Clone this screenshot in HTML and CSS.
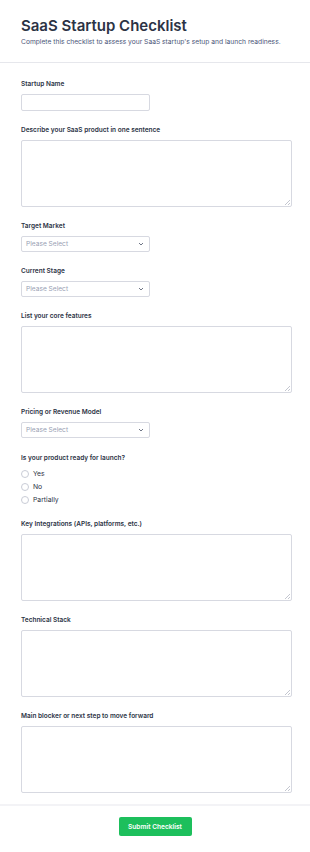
FILE: index.html
```html
<!DOCTYPE html>
<html lang="en">

<head>
    <meta charset="UTF-8">
    <meta name="viewport" content="width=device-width, initial-scale=1.0">
    <title>SaaS Startup Checklist</title>
    <link rel="stylesheet" href="styles.css">
</head>

<body>
    <div class="header">
        <h1 class="title">SaaS Startup Checklist</h1>
        <p class="subtitle">Complete this checklist to assess your SaaS startup's setup and launch readiness.</p>
    </div>

    <form class="form">
        <div class="field">
            <label class="label">Startup Name</label>
            <input class="input" type="text">
        </div>

        <div class="field">
            <label class="label">Describe your SaaS product in one sentence</label>
            <textarea class="textarea"></textarea>
        </div>

        <div class="field">
            <label class="label">Target Market</label>
            <div class="select">
                <span>Please Select</span>
                <svg width="6" height="4" viewBox="0 0 6 4"><path d="M1 1l2 2 2-2" fill="none" stroke="#6f7686" stroke-width="1"/></svg>
            </div>
        </div>

        <div class="field">
            <label class="label">Current Stage</label>
            <div class="select">
                <span>Please Select</span>
                <svg width="6" height="4" viewBox="0 0 6 4"><path d="M1 1l2 2 2-2" fill="none" stroke="#6f7686" stroke-width="1"/></svg>
            </div>
        </div>

        <div class="field">
            <label class="label">List your core features</label>
            <textarea class="textarea"></textarea>
        </div>

        <div class="field">
            <label class="label">Pricing or Revenue Model</label>
            <div class="select">
                <span>Please Select</span>
                <svg width="6" height="4" viewBox="0 0 6 4"><path d="M1 1l2 2 2-2" fill="none" stroke="#6f7686" stroke-width="1"/></svg>
            </div>
        </div>

        <div class="field radio-field">
            <label class="label">Is your product ready for launch?</label>
            <div class="radios">
                <div class="radio"><span class="circle"></span>Yes</div>
                <div class="radio"><span class="circle"></span>No</div>
                <div class="radio"><span class="circle"></span>Partially</div>
            </div>
        </div>

        <div class="field">
            <label class="label">Key Integrations (APIs, platforms, etc.)</label>
            <textarea class="textarea"></textarea>
        </div>

        <div class="field">
            <label class="label">Technical Stack</label>
            <textarea class="textarea"></textarea>
        </div>

        <div class="field">
            <label class="label">Main blocker or next step to move forward</label>
            <textarea class="textarea"></textarea>
        </div>
    </form>

    <div class="footer">
        <button class="submit" type="button">Submit Checklist</button>
    </div>
</body>

</html>
```

FILE: styles.css
```css
* {
    margin: 0;
    padding: 0;
    box-sizing: border-box;
}

body {
    font-family: Inter, "Noto Sans", sans-serif;
    background-color: #fff;
    color: #2c3345;
}

.header {
    padding: 16px 21px 15px 21px;
    border-bottom: 1px solid #e6e7ec;
}

.title {
    font-size: 15px;
    line-height: 20px;
    font-weight: 600;
    color: #2c3345;
}

.subtitle {
    margin-top: 1px;
    font-size: 6.7px;
    line-height: 10px;
    color: #4a5578;
}

.form {
    padding: 16px 18px 10px 21px;
    display: flex;
    flex-direction: column;
    gap: 14px;
}

.field {
    display: flex;
    flex-direction: column;
}

.radio-field {
    margin-top: 1px;
}

.label {
    font-size: 6.5px;
    line-height: 10px;
    font-weight: 600;
    color: #2c3345;
    margin-bottom: 5px;
}

.input {
    width: 129px;
    height: 17px;
    border: 1px solid #d7d9e1;
    border-radius: 2px;
    background: #fff;
}

/* small grip in the corner instead of the big native resizer */
.textarea {
    width: 271px;
    height: 67px;
    border: 1px solid #d7d9e1;
    border-radius: 2px;
    resize: none;
    background-color: #fff;
    background-image: linear-gradient(135deg, transparent 45%, #c4c7d0 45%, #c4c7d0 58%, transparent 58%, transparent 72%, #c4c7d0 72%, #c4c7d0 86%, transparent 86%);
    background-size: 5px 5px;
    background-position: right 1px bottom 1px;
    background-repeat: no-repeat;
}

.select {
    width: 129px;
    height: 16px;
    border: 1px solid #d7d9e1;
    border-radius: 2px;
    display: flex;
    align-items: center;
    justify-content: space-between;
    padding: 0 5px 0 4px;
    font-size: 6.6px;
    color: #98a0b3;
}

.radios {
    display: flex;
    flex-direction: column;
    gap: 4px;
    padding-top: 1px;
    padding-bottom: 1px;
}

.radio {
    display: flex;
    align-items: center;
    gap: 4px;
    font-size: 6.8px;
    line-height: 9px;
    color: #2c3345;
}

.circle {
    width: 8px;
    height: 8px;
    border: 1px solid #c9ccd6;
    border-radius: 50%;
}

.footer {
    margin-top: 1px;
    border-top: 2px solid #f3f3f6;
    padding: 11px 0 17px 0;
    display: flex;
    justify-content: center;
}

.submit {
    width: 73px;
    height: 19px;
    border: none;
    border-radius: 2px;
    background-color: #1dbf5c;
    color: #fff;
    font-family: Inter, "Noto Sans", sans-serif;
    font-size: 6.6px;
    font-weight: 600;
}
```
